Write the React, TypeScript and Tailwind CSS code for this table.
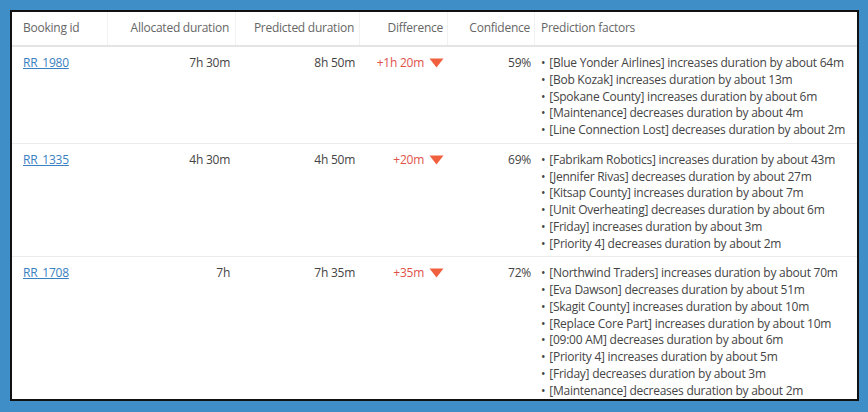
import React from 'react';

interface Booking {
  id: string;
  allocated: string;
  predicted: string;
  difference: string;
  confidence: string;
  factors: string[];
}

const bookings: Booking[] = [
  {
    id: 'RR_1980',
    allocated: '7h 30m',
    predicted: '8h 50m',
    difference: '+1h 20m',
    confidence: '59%',
    factors: [
      '[Blue Yonder Airlines] increases duration by about 64m',
      '[Bob Kozak] increases duration by about 13m',
      '[Spokane County] increases duration by about 6m',
      '[Maintenance] decreases duration by about 4m',
      '[Line Connection Lost] decreases duration by about 2m',
    ],
  },
  {
    id: 'RR_1335',
    allocated: '4h 30m',
    predicted: '4h 50m',
    difference: '+20m',
    confidence: '69%',
    factors: [
      '[Fabrikam Robotics] increases duration by about 43m',
      '[Jennifer Rivas] decreases duration by about 27m',
      '[Kitsap County] increases duration by about 7m',
      '[Unit Overheating] decreases duration by about 6m',
      '[Friday] increases duration by about 3m',
      '[Priority 4] decreases duration by about 2m',
    ],
  },
  {
    id: 'RR_1708',
    allocated: '7h',
    predicted: '7h 35m',
    difference: '+35m',
    confidence: '72%',
    factors: [
      '[Northwind Traders] increases duration by about 70m',
      '[Eva Dawson] decreases duration by about 51m',
      '[Skagit County] increases duration by about 10m',
      '[Replace Core Part] increases duration by about 10m',
      '[09:00 AM] decreases duration by about 6m',
      '[Priority 4] increases duration by about 5m',
      '[Friday] decreases duration by about 3m',
      '[Maintenance] decreases duration by about 2m',
    ],
  },
];

const cols = 'grid grid-cols-[96px_128px_124px_88px_87px_1fr]';

const DownTriangle = () => (
  <svg width="15" height="10" viewBox="0 0 15 10" className="shrink-0">
    <path d="M0.5 0.5 H14.5 L7.5 9.5 Z" fill="#f0603f" />
  </svg>
);

export default function App() {
  return (
    <div
      className="w-[868px] h-[412px] bg-[#3f8ec8] pl-[10px] pt-[10px] pr-[9px] pb-[11px]"
      style={{ fontFamily: '"Open Sans", "Noto Sans", sans-serif' }}
    >
      <div className="h-full bg-white border-2 border-[#111] text-[12px] tracking-[-0.25px] text-[#444] overflow-hidden">
        <div className={`${cols} h-[35px] items-center text-[#666] border-b-2 border-[#e4e4e4]`}>
          <div className="pl-[11px] pb-[2px] h-full flex items-center border-r border-[#f2f2f2]">Booking id</div>
          <div className="pr-[6px] pb-[2px] h-full flex items-center justify-end border-r border-[#f2f2f2]">Allocated duration</div>
          <div className="pr-[5px] pb-[2px] h-full flex items-center justify-end border-r border-[#f2f2f2]">Predicted duration</div>
          <div className="pr-[4px] pb-[2px] h-full flex items-center justify-end border-r border-[#f2f2f2]">Difference</div>
          <div className="pr-[4px] pb-[2px] h-full flex items-center justify-end border-r border-[#f2f2f2]">Confidence</div>
          <div className="pl-[6px] pb-[2px] h-full flex items-center">Prediction factors</div>
        </div>
        {bookings.map((b, i) => (
          <div
            key={b.id}
            className={`${cols} pt-[8px] pb-[4px] leading-[16.75px] ${i < bookings.length - 1 ? 'border-b border-[#ececec]' : ''}`}
          >
            <div className="pl-[11px]">
              <span className="text-[#3a7fc1] underline">{b.id}</span>
            </div>
            <div className="pr-[6px] text-right">{b.allocated}</div>
            <div className="pr-[5px] text-right">{b.predicted}</div>
            <div className="pr-[4px] flex justify-end items-start gap-[5px]">
              <span className="text-[#e0524a]">{b.difference}</span>
              <span className="pt-[3px]"><DownTriangle /></span>
            </div>
            <div className="pr-[4px] text-right">{b.confidence}</div>
            <div className="pl-[6px]">
              {b.factors.map(f => (
                <div key={f} className="whitespace-nowrap">
                  <span className="mr-[4px]">•</span>
                  {f}
                </div>
              ))}
            </div>
          </div>
        ))}
      </div>
    </div>
  );
}
